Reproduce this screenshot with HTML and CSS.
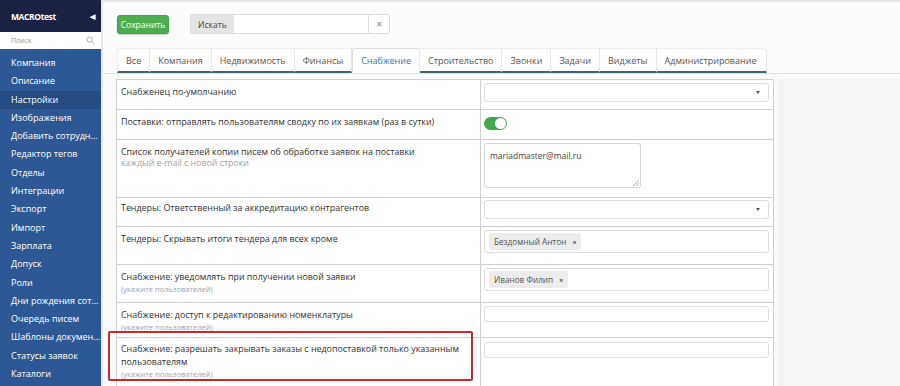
FILE: index.html
```html
<!DOCTYPE html>
<html lang="ru">

<head>
  <meta charset="UTF-8">
  <meta name="viewport" content="width=device-width, initial-scale=1.0">
  <title>Настройки</title>
  <link rel="stylesheet" href="styles.css">
</head>

<body>
  <aside class="sidebar">
    <div class="brand">
      <span>MACROtest</span>
      <span class="collapse">&#9664;</span>
    </div>
    <div class="side-search">
      <span>Поиск</span>
      <svg width="9" height="9" viewBox="0 0 10 10"><circle cx="4" cy="4" r="3" fill="none" stroke="#aaa" stroke-width="1.1"/><line x1="6.2" y1="6.2" x2="9" y2="9" stroke="#aaa" stroke-width="1.1"/></svg>
    </div>
    <ul class="menu">
      <li>Компания</li>
      <li>Описание</li>
      <li class="active">Настройки</li>
      <li>Изображения</li>
      <li>Добавить сотрудн...</li>
      <li>Редактор тегов</li>
      <li>Отделы</li>
      <li>Интеграции</li>
      <li>Экспорт</li>
      <li>Импорт</li>
      <li>Зарплата</li>
      <li>Допуск</li>
      <li>Роли</li>
      <li>Дни рождения сот...</li>
      <li>Очередь писем</li>
      <li>Шаблоны докумен...</li>
      <li>Статусы заявок</li>
      <li>Каталоги</li>
    </ul>
  </aside>

  <main class="main">
    <div class="toolbar">
      <button class="save-btn">Сохранить</button>
      <div class="search-group">
        <span class="addon">Искать</span>
        <span class="search-input"></span>
        <span class="clear">&#10005;</span>
      </div>
    </div>

    <div class="tabs-row">
      <ul class="tabs">
        <li>Все</li>
        <li>Компания</li>
        <li>Недвижимость</li>
        <li>Финансы</li>
        <li class="active">Снабжение</li>
        <li>Строительство</li>
        <li>Звонки</li>
        <li>Задачи</li>
        <li>Виджеты</li>
        <li>Администрирование</li>
      </ul>
    </div>

    <div class="content">
      <div class="settings">
        <div class="row r1">
          <div class="label">Снабженец по-умолчанию</div>
          <div class="value"><div class="select"><span class="caret"></span></div></div>
        </div>
        <div class="row r2">
          <div class="label">Поставки: отправлять пользователям сводку по их заявкам (раз в сутки)</div>
          <div class="value"><span class="toggle"></span></div>
        </div>
        <div class="row r3">
          <div class="label">Список получателей копии писем об обработке заявок на поставки
            <div class="hint">каждый e-mail с новой строки</div>
          </div>
          <div class="value">
            <div class="textarea">mariadmaster@mail.ru
              <svg class="grip" width="6" height="6" viewBox="0 0 6 6"><path d="M6 0L0 6M6 3L3 6" stroke="#999" stroke-width="0.8"/></svg>
            </div>
          </div>
        </div>
        <div class="row r4">
          <div class="label">Тендеры: Ответственный за аккредитацию контрагентов</div>
          <div class="value"><div class="select"><span class="caret"></span></div></div>
        </div>
        <div class="row r5">
          <div class="label">Тендеры: Скрывать итоги тендера для всех кроме</div>
          <div class="value"><div class="multi"><span class="tag">Бездомный Антон <b>&times;</b></span></div></div>
        </div>
        <div class="row r6">
          <div class="label">Снабжение: уведомлять при получении новой заявки
            <div class="hint small">(укажите пользователей)</div>
          </div>
          <div class="value"><div class="multi"><span class="tag">Иванов Филип <b>&times;</b></span></div></div>
        </div>
        <div class="row r7">
          <div class="label">Снабжение: доступ к редактированию номенклатуры
            <div class="hint small">(укажите пользователей)</div>
          </div>
          <div class="value"><div class="input"></div></div>
        </div>
        <div class="row r8">
          <div class="label">Снабжение: разрешать закрывать заказы с недопоставкой только указанным пользователям
            <div class="hint small">(укажите пользователей)</div>
            <span class="highlight"></span>
          </div>
          <div class="value"><div class="input"></div></div>
        </div>
      </div>
      <div class="side-panel"></div>
    </div>
  </main>
</body>

</html>
```

FILE: styles.css
```css
body {
  margin: 0;
  padding: 0;
  height: 386px;
  overflow: hidden;
  display: flex;
  font-family: 'Open Sans', 'Noto Sans', sans-serif;
  color: #333;
  background-color: #ffffff;
}

ul {
  list-style: none;
  margin: 0;
  padding: 0;
}

/* Sidebar */
.sidebar {
  width: 101px;
  flex-shrink: 0;
  background-color: #2c5995;
  color: #fff;
  font-size: 9px;
}

.brand {
  height: 32px;
  background-color: #1b2140;
  display: flex;
  align-items: center;
  justify-content: space-between;
  padding: 0 6px 0 11px;
  font-weight: bold;
  font-size: 8.5px;
  letter-spacing: -0.4px;
}

.collapse {
  font-size: 7px;
}

.side-search {
  height: 17px;
  background-color: #fff;
  color: #999;
  font-size: 7px;
  display: flex;
  align-items: center;
  justify-content: space-between;
  padding: 0 6px 0 11px;
}

.menu {
  padding-top: 5px;
}

.menu li {
  height: 18.3px;
  line-height: 18.3px;
  padding-left: 11px;
  white-space: nowrap;
}

.menu li.active {
  background-color: #254c82;
}

/* Main */
.main {
  flex: 1;
  display: flex;
  flex-direction: column;
  border-left: 2px solid #e3e6ea;
  border-top: 2px solid #e6e6e6;
  background-color: #fcfcfc;
}

.toolbar {
  display: flex;
  align-items: center;
  gap: 21px;
  padding: 13px 0 0 14px;
  height: 18px;
}

.save-btn {
  height: 19px;
  width: 52px;
  padding: 0;
  font-family: inherit;
  font-size: 8.5px;
  color: #fff;
  background-color: #4cae50;
  border: 1px solid #43a047;
  border-radius: 3px;
  box-shadow: 0 1px 2px rgba(0, 0, 0, 0.2);
}

.search-group {
  display: flex;
  height: 18px;
  border: 1px solid #ddd;
  border-radius: 2px;
  background-color: #fff;
  font-size: 8.5px;
}

.addon {
  width: 43px;
  background-color: #e4e4e4;
  display: flex;
  align-items: center;
  padding-left: 7px;
  box-sizing: border-box;
  color: #444;
}

.search-input {
  width: 134px;
}

.clear {
  width: 20px;
  border-left: 1px solid #ddd;
  display: flex;
  align-items: center;
  justify-content: center;
  color: #888;
  font-size: 7.5px;
}

/* Tabs */
.tabs-row {
  margin-top: 15px;
  padding-left: 14px;
  border-bottom: 1px solid #e2e2e2;
}

.tabs {
  display: flex;
  height: 25px;
  font-size: 9px;
  color: #555;
}

.tabs li {
  border-top: 1px solid #eee;
  border-right: 1px solid #e6e6e6;
  border-bottom: 2px solid #3f6577;
  display: flex;
  align-items: center;
  padding: 0 8px;
  background-color: #fff;
  white-space: nowrap;
}

.tabs li:first-child {
  border-left: 1px solid #eee;
}

.tabs li:last-child {
  padding-right: 10px;
  border-top-right-radius: 4px;
}

.tabs li.active {
  color: #2f78b5;
  border-bottom-color: transparent;
  border-top: 1px solid #ddd;
  border-left: 1px solid #ddd;
  border-top-left-radius: 3px;
  border-top-right-radius: 3px;
}

/* Content */
.content {
  flex: 1;
  display: flex;
  padding-top: 5px;
}

.settings {
  margin-left: 13px;
  width: 656px;
  border: 1px solid #cfcfcf;
  border-bottom: none;
  background-color: #fff;
}

.side-panel {
  flex: 1;
  margin-left: 4px;
  background-color: #f5f5f5;
}

.row {
  display: flex;
  border-bottom: 1px solid #d0d0d0;
}

.r1 { height: 29px; }
.r2 { height: 29px; }
.r3 { height: 57px; }
.r4 { height: 28px; }
.r5 { height: 37px; }
.r6 { height: 37px; }
.r7 { height: 34px; }
.r8 { height: 60px; border-bottom: none; }

.label {
  position: relative;
  width: 364px;
  padding: 5px 6px 0 4px;
  box-sizing: border-box;
  font-size: 8.9px;
  line-height: 13px;
  color: #303030;
  border-right: 1px solid #cfcfcf;
}

.r4 .label {
  padding-top: 3px;
}

.r8 .label {
  padding-top: 4px;
}

.hint {
  color: #a3a3a3;
  font-size: 8.8px;
  line-height: 10px;
}

.hint.small {
  font-size: 7.5px;
  line-height: 11px;
  margin-top: 1px;
}

.highlight {
  position: absolute;
  left: -9px;
  top: -7px;
  width: 361px;
  height: 46px;
  border: 2px solid #c62a2f;
  border-radius: 2px;
}

.value {
  flex: 1;
  padding: 3px 4px 0 3px;
}

.select,
.multi,
.input {
  position: relative;
  height: 17px;
  border: 1px solid #dcdcdc;
  border-radius: 3px;
  background-color: #fff;
}

.r4 .value { padding-top: 2px; }

.caret {
  position: absolute;
  right: 8px;
  top: 7px;
  border-left: 2.5px solid transparent;
  border-right: 2.5px solid transparent;
  border-top: 3px solid #555;
}

.multi {
  height: 21px;
  display: flex;
  align-items: center;
  padding-left: 4px;
}

.input {
  height: 14px;
}

.r8 .value {
  padding-top: 4px;
}

.tag {
  background-color: #ececec;
  font-size: 8.2px;
  color: #555;
  padding: 3px 5px;
  border-radius: 2px;
}

.tag b {
  font-size: 7px;
  margin-left: 4px;
}

.toggle {
  position: relative;
  display: block;
  margin-top: 4px;
  width: 23px;
  height: 13px;
  background-color: #43a84c;
  border-radius: 7px;
}

.toggle::after {
  content: "";
  position: absolute;
  right: 1px;
  top: 1px;
  width: 11px;
  height: 11px;
  border-radius: 50%;
  background-color: #fff;
}

.textarea {
  position: relative;
  width: 157px;
  height: 45px;
  box-sizing: border-box;
  border: 1px solid #d6d6d6;
  border-radius: 3px;
  padding: 6px 5px;
  font-size: 8.5px;
  color: #444;
}

.grip {
  position: absolute;
  right: 1px;
  bottom: 1px;
}
```
